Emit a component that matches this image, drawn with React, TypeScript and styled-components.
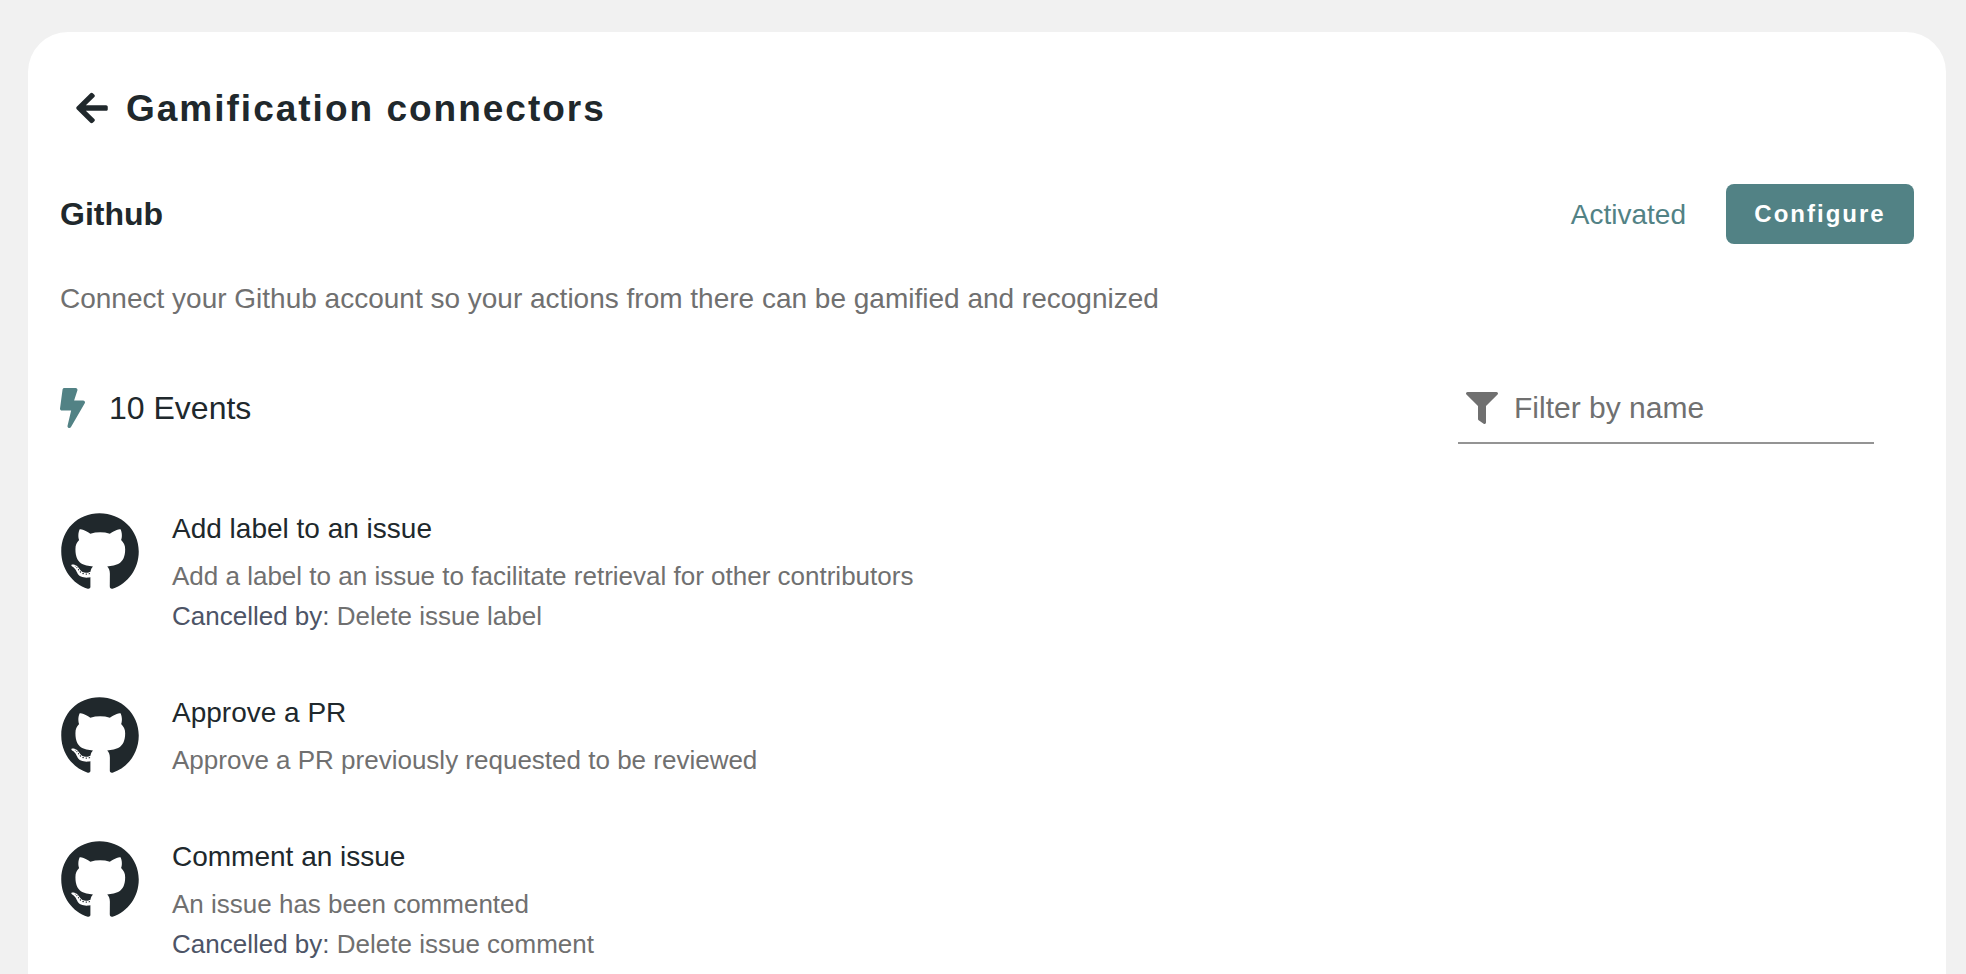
import React, { useState } from "react";
import styled, { createGlobalStyle } from "styled-components";
import { FaArrowLeft, FaBolt, FaFilter, FaGithub } from "react-icons/fa";

const color = {
  page: "#f1f1f1",
  surface: "#ffffff",
  text: "#20282c",
  muted: "#707070",
  label: "#4d5466",
  primary: "#528285",
  line: "#949494",
};

const GlobalStyle = createGlobalStyle`
  * {
    box-sizing: border-box;
  }
  body {
    margin: 0;
    background: ${color.page};
    color: ${color.text};
    font-family: "Liberation Sans", Helvetica, Arial, sans-serif;
    font-size: 28px;
    line-height: 42px;
  }
`;

const Page = styled.div`
  display: flex;
  min-height: 100vh;
  padding: 32px 20px 0 28px;
`;

const Card = styled.main`
  flex: 1;
  min-width: 0;
  padding: 44px 32px 0;
  border-radius: 40px 40px 0 0;
  background: ${color.surface};
`;

const TitleBar = styled.header`
  display: flex;
  align-items: center;
  gap: 18px;
  height: 64px;
  padding-left: 16px;
`;

const BackButton = styled.button`
  display: flex;
  padding: 0;
  border: 0;
  background: none;
  color: inherit;
  font-size: 36px;
  cursor: pointer;

  svg {
    width: 32px;
  }
`;

const Title = styled.h1`
  margin: 0;
  padding-top: 2px;
  font-size: 37px;
  letter-spacing: 2px;
`;

const ConnectorBar = styled.div`
  display: flex;
  align-items: center;
  justify-content: space-between;
  margin-top: 44px;
`;

const ConnectorName = styled.h2`
  margin: 0;
  font-size: 32px;
`;

const ConnectorActions = styled.div`
  display: flex;
  align-items: center;
  gap: 40px;
`;

const Status = styled.span`
  padding-top: 2px;
  color: ${color.primary};
`;

const ConfigureButton = styled.button`
  min-width: 188px;
  height: 60px;
  padding: 0 28px;
  border: 0;
  border-radius: 8px;
  background: ${color.primary};
  color: ${color.surface};
  font: inherit;
  font-size: 24px;
  font-weight: 700;
  letter-spacing: 2px;
  cursor: pointer;
`;

const Description = styled.p`
  margin: 34px 0 0;
  color: ${color.muted};
`;

const EventsBar = styled.div`
  display: flex;
  align-items: center;
  justify-content: space-between;
  margin-top: 52px;
  padding-right: 40px;
`;

const EventsCount = styled.h3`
  display: flex;
  align-items: center;
  gap: 24px;
  margin: 0;
  font-size: 32px;
  font-weight: 400;

  svg {
    width: 25px;
    height: 40px;
    color: ${color.primary};
  }
`;

const FilterField = styled.label`
  display: flex;
  align-items: center;
  gap: 16px;
  width: 416px;
  height: 72px;
  padding: 2px 8px 0;
  border-bottom: 2px solid ${color.line};
  color: ${color.muted};

  svg {
    flex: none;
    width: 32px;
    height: 32px;
  }
`;

const FilterInput = styled.input`
  flex: 1;
  min-width: 0;
  padding: 0;
  border: 0;
  outline: 0;
  background: none;
  color: ${color.text};
  font: inherit;
  font-size: 30px;

  &::placeholder {
    color: ${color.muted};
    opacity: 1;
  }
`;

const EventList = styled.ul`
  display: flex;
  flex-direction: column;
  gap: 56px;
  margin: 64px 0 0;
  padding: 0;
  list-style: none;
`;

const EventItem = styled.li`
  display: flex;
  gap: 32px;

  > svg {
    flex: none;
    width: 80px;
    height: 80px;
    margin-top: 4px;
  }
`;

const EventTitle = styled.h4`
  margin: 0 0 6px;
  font-size: 28px;
  font-weight: 400;
`;

const EventText = styled.p`
  margin: 0;
  color: ${color.muted};
  font-size: 26px;
  line-height: 40px;
`;

const EventLabel = styled.span`
  color: ${color.label};
`;

interface ConnectorEvent {
  title: string;
  description: string;
  cancelledBy?: string;
}

const events: ConnectorEvent[] = [
  {
    title: "Add label to an issue",
    description: "Add a label to an issue to facilitate retrieval for other contributors",
    cancelledBy: "Delete issue label",
  },
  {
    title: "Approve a PR",
    description: "Approve a PR previously requested to be reviewed",
  },
  {
    title: "Comment an issue",
    description: "An issue has been commented",
    cancelledBy: "Delete issue comment",
  },
];

export default function App() {
  const [filter, setFilter] = useState("");
  const shown = events.filter((event) =>
    event.title.toLowerCase().includes(filter.toLowerCase())
  );

  return (
    <Page>
      <GlobalStyle />
      <Card>
        <TitleBar>
          <BackButton type="button" aria-label="Back">
            <FaArrowLeft />
          </BackButton>
          <Title>Gamification connectors</Title>
        </TitleBar>

        <ConnectorBar>
          <ConnectorName>Github</ConnectorName>
          <ConnectorActions>
            <Status>Activated</Status>
            <ConfigureButton type="button">Configure</ConfigureButton>
          </ConnectorActions>
        </ConnectorBar>
        <Description>
          Connect your Github account so your actions from there can be gamified and recognized
        </Description>

        <EventsBar>
          <EventsCount>
            <FaBolt />
            10 Events
          </EventsCount>
          <FilterField>
            <FaFilter />
            <FilterInput
              type="text"
              aria-label="Filter by name"
              placeholder="Filter by name"
              value={filter}
              onChange={(e) => setFilter(e.target.value)}
            />
          </FilterField>
        </EventsBar>

        <EventList>
          {shown.map((event) => (
            <EventItem key={event.title}>
              <FaGithub />
              <div>
                <EventTitle>{event.title}</EventTitle>
                <EventText>{event.description}</EventText>
                {event.cancelledBy && (
                  <EventText>
                    <EventLabel>Cancelled by:</EventLabel> {event.cancelledBy}
                  </EventText>
                )}
              </div>
            </EventItem>
          ))}
        </EventList>
      </Card>
    </Page>
  );
}
